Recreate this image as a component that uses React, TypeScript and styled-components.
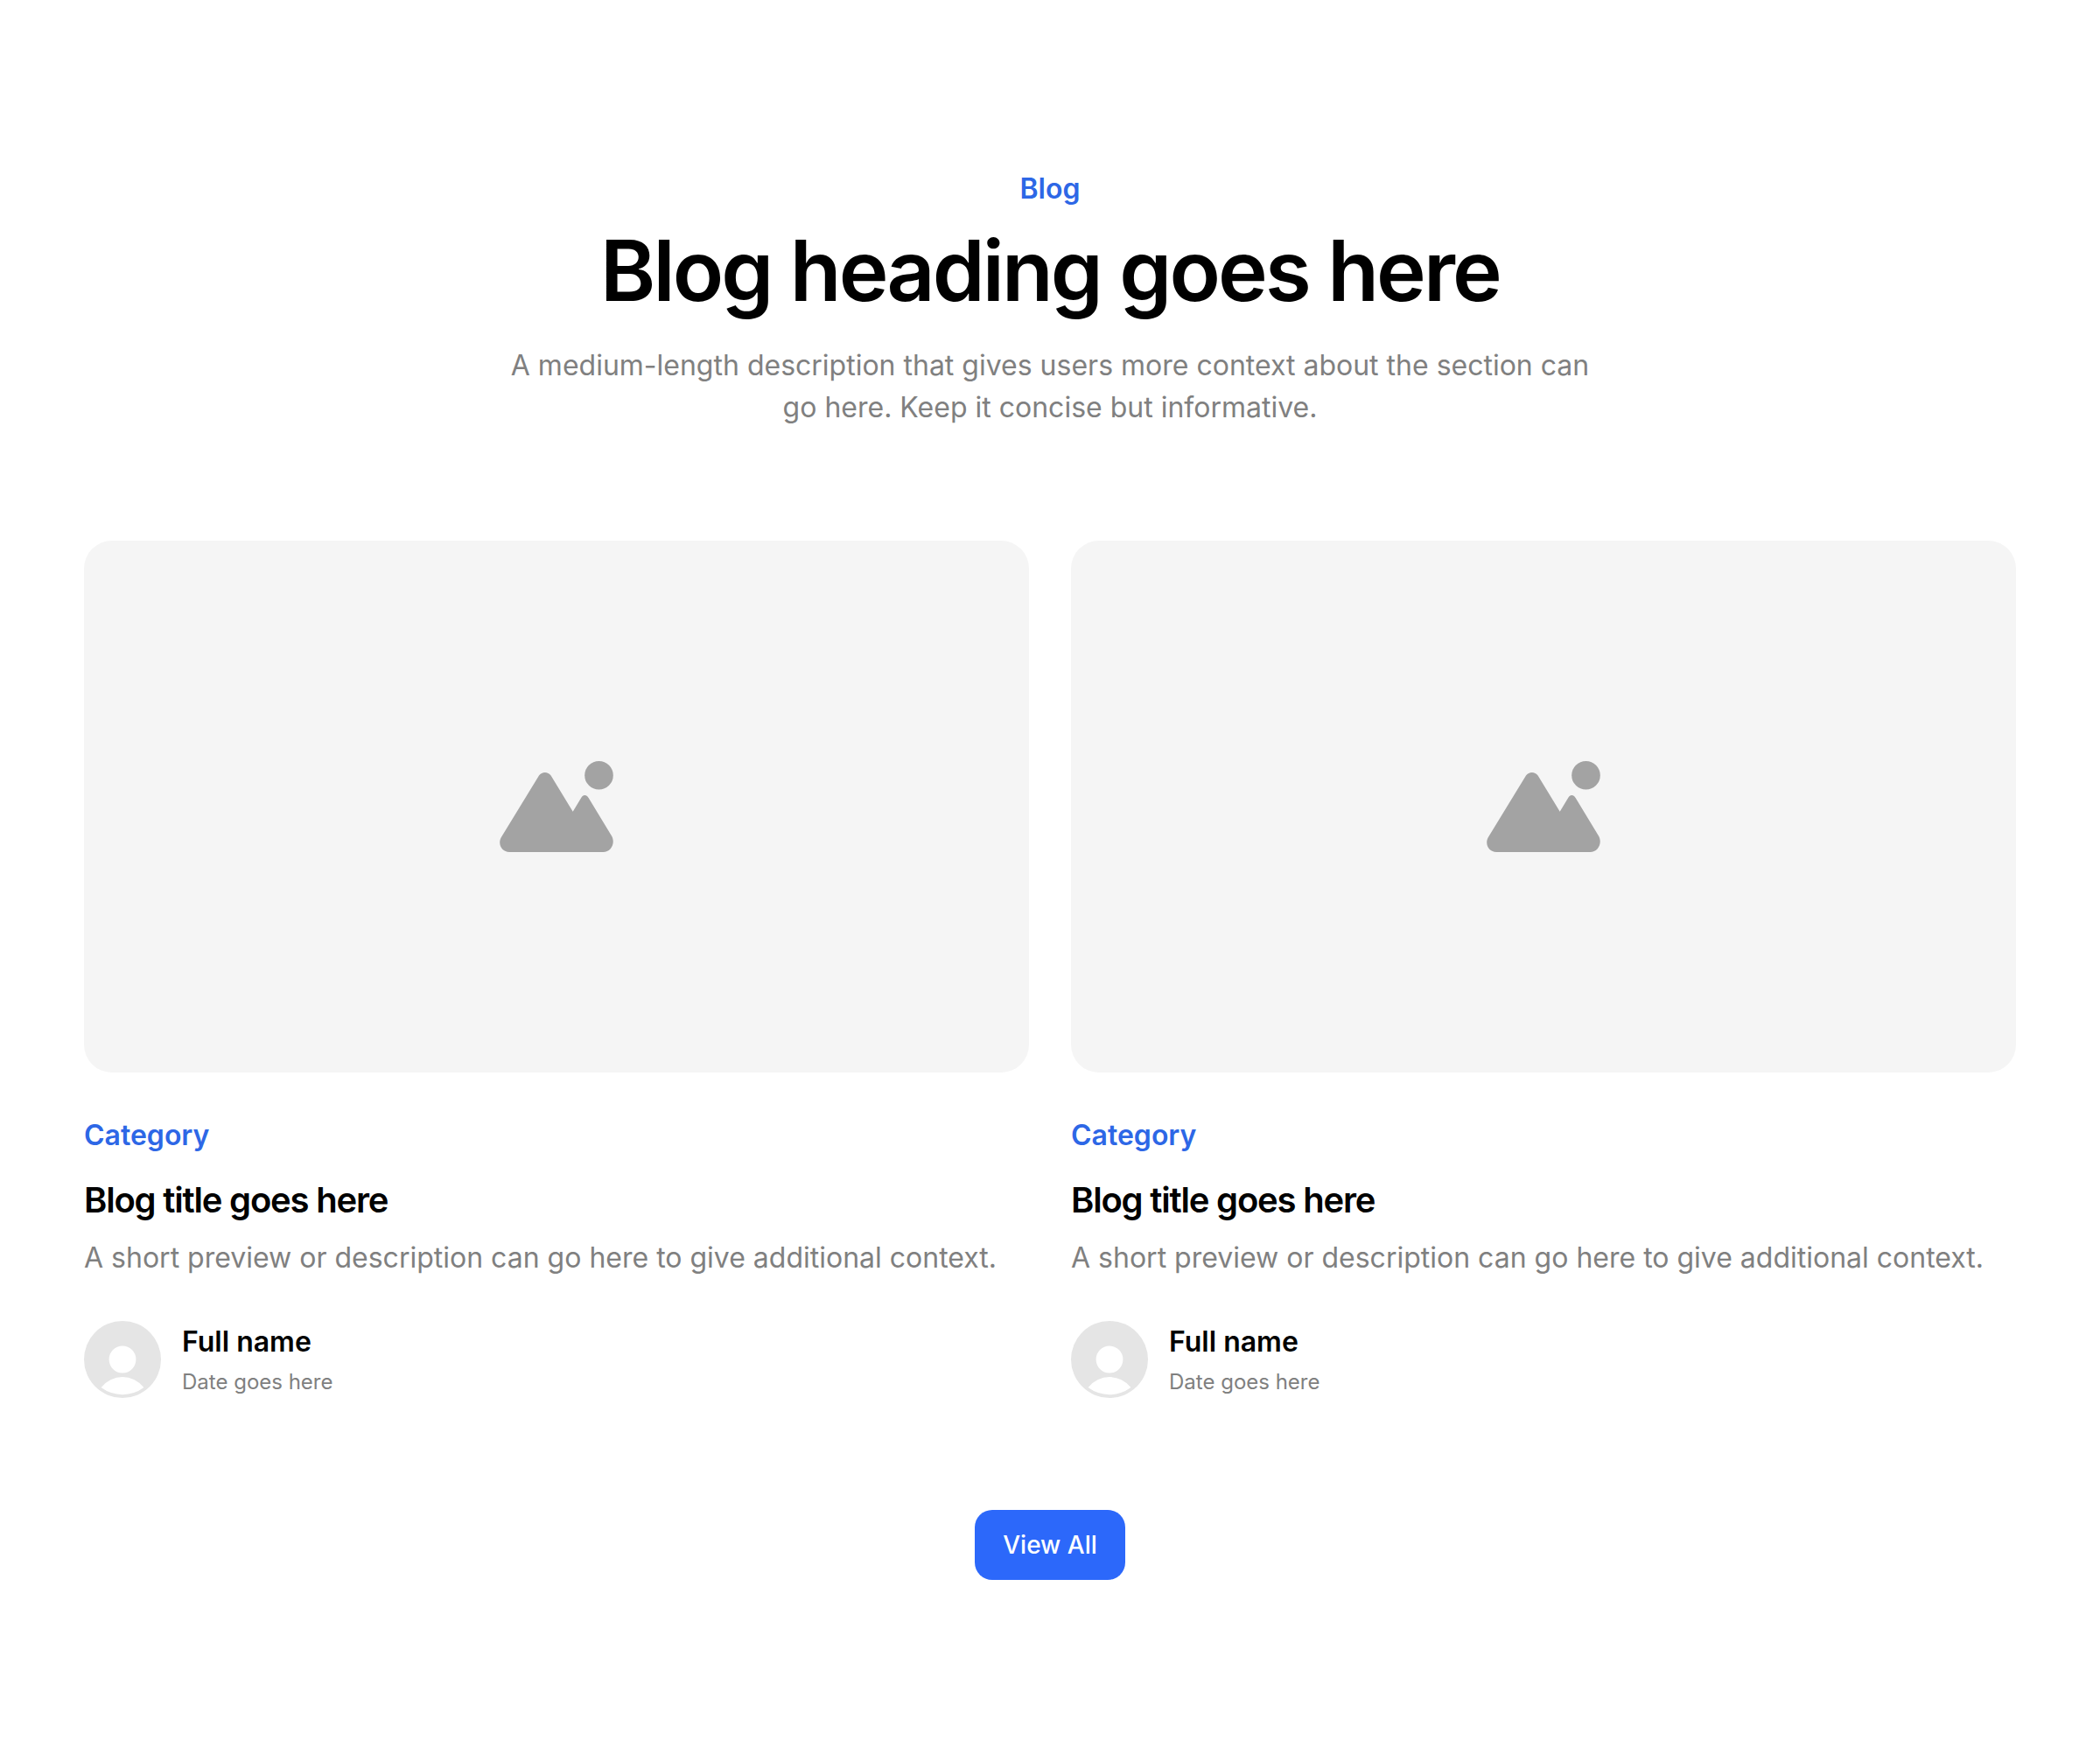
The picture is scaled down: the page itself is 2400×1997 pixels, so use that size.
import React from "react";
import styled, { createGlobalStyle, css } from "styled-components";

const GlobalStyle = createGlobalStyle`
  *, *::before, *::after { box-sizing: border-box; }
  body {
    margin: 0;
    background: #ffffff;
    color: #000000;
    font-family: Inter, "Liberation Sans", sans-serif;
    font-size: 32px;
    line-height: 48px;
  }
  h1, h2, p { margin: 0; }
`;

const Section = styled.section`
  display: flex;
  flex-direction: column;
  align-items: center;
  gap: 128px;
  padding: 192px 96px;
`;

const Header = styled.header`
  display: flex;
  flex-direction: column;
  align-items: center;
  max-width: 1280px;
  text-align: center;
`;

const Label = styled.p`
  color: #2d67e6;
  font-weight: 600;
`;

const Heading = styled.h1`
  margin: 16px 0 32px;
  font-size: 96px;
  line-height: 106px;
  font-weight: 600;
  letter-spacing: -0.03em;
`;

const Description = styled.p`
  color: #808080;
`;

const Posts = styled.div`
  display: grid;
  grid-template-columns: repeat(auto-fit, minmax(min(100%, 640px), 1fr));
  gap: 96px 48px;
  width: 100%;
`;

const Post = styled.article`
  display: flex;
  flex-direction: column;
  gap: 48px;
`;

const Thumbnail = styled.div`
  display: flex;
  align-items: center;
  justify-content: center;
  aspect-ratio: 16 / 9;
  border-radius: 32px;
  background: #f5f5f5;
`;

const PostTitle = styled.h2`
  margin: 24px 0 16px;
  font-size: 40px;
  line-height: 52px;
  font-weight: 600;
  letter-spacing: -0.03em;
`;

const Author = styled.div`
  display: flex;
  align-items: center;
  gap: 24px;
`;

const AuthorText = styled.div`
  display: flex;
  flex-direction: column;
  gap: 4px;
`;

const AuthorLine = styled.p<{ $muted?: boolean }>`
  font-weight: 600;
  ${({ $muted }) =>
    $muted &&
    css`
      color: #808080;
      font-size: 24px;
      line-height: 36px;
      font-weight: 400;
    `}
`;

const Icon = styled.svg`
  display: block;
  flex: none;
`;

const ViewAll = styled.button`
  padding: 20px 32px;
  border: 0;
  border-radius: 20px;
  background: #2c68fa;
  color: #ffffff;
  font: 500 28px/40px Inter, "Liberation Sans", sans-serif;
  cursor: pointer;
`;

const PictureIcon = () => (
  <Icon width="130" height="104" viewBox="0 0 130 104" fill="#a3a3a3" aria-hidden="true">
    <circle cx="113.5" cy="16.3" r="16.3" />
    <path d="M45 16.6C48.2 11.8 55.4 11.8 58.6 16.6L83.7 57.7L93.2 42C95.2 38 99.4 38 101.6 42L128.3 86C132.5 94.5 127 104 118.3 104H11.2C2.4 104-2.6 94.5 1.9 87Z" />
  </Icon>
);

const AvatarIcon = () => (
  <Icon width="88" height="88" viewBox="0 0 88 88" aria-hidden="true">
    <circle cx="44" cy="44" r="44" fill="#e5e5e5" />
    <circle cx="44" cy="44" r="15.4" fill="#ffffff" />
    <path d="M19.6 76A31 31 0 0 1 68.4 76A40.3 40.3 0 0 1 19.6 76Z" fill="#ffffff" />
  </Icon>
);

const posts = [1, 2].map((id) => ({
  id,
  category: "Category",
  title: "Blog title goes here",
  preview: "A short preview or description can go here to give additional context.",
  author: "Full name",
  date: "Date goes here",
}));

export default function App() {
  return (
    <>
      <GlobalStyle />
      <Section>
        <Header>
          <Label>Blog</Label>
          <Heading>Blog heading goes here</Heading>
          <Description>
            A medium-length description that gives users more context about the section can go here.
            Keep it concise but informative.
          </Description>
        </Header>
        <Posts>
          {posts.map((post) => (
            <Post key={post.id}>
              <Thumbnail>
                <PictureIcon />
              </Thumbnail>
              <div>
                <Label>{post.category}</Label>
                <PostTitle>{post.title}</PostTitle>
                <Description>{post.preview}</Description>
              </div>
              <Author>
                <AvatarIcon />
                <AuthorText>
                  <AuthorLine>{post.author}</AuthorLine>
                  <AuthorLine $muted>{post.date}</AuthorLine>
                </AuthorText>
              </Author>
            </Post>
          ))}
        </Posts>
        <ViewAll type="button">View All</ViewAll>
      </Section>
    </>
  );
}
